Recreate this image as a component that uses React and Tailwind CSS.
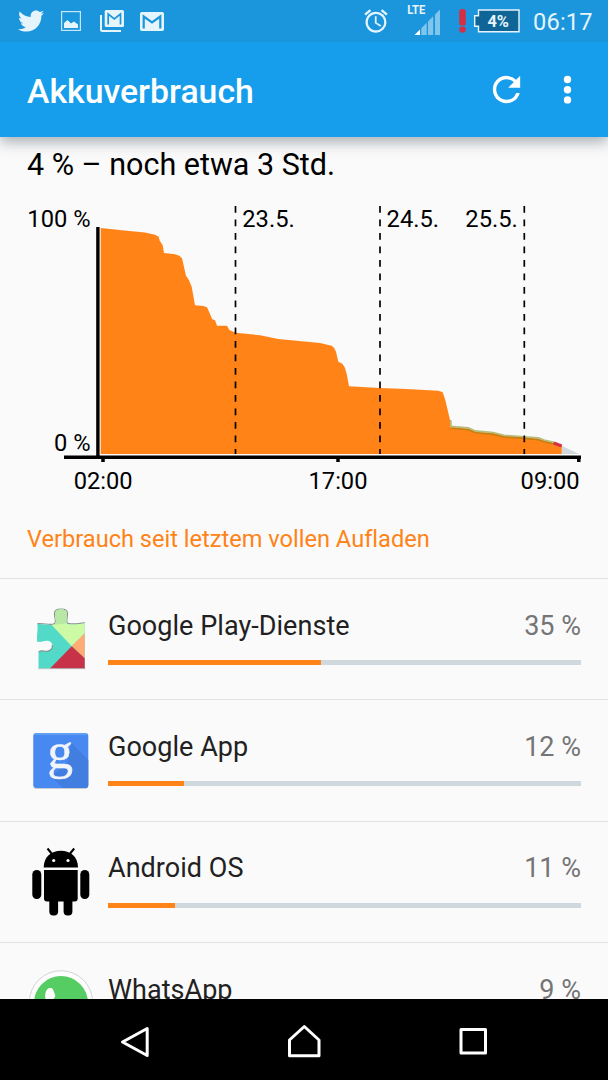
import { FaTwitter } from 'react-icons/fa';
import { MdAlarm, MdRefresh } from 'react-icons/md';

const apps = [
  { name: 'Google Play-Dienste', percent: 35, fill: 45, Icon: PlayServicesIcon },
  { name: 'Google App', percent: 12, fill: 16, Icon: GoogleIcon },
  { name: 'Android OS', percent: 11, fill: 14.2, Icon: AndroidIcon },
  { name: 'WhatsApp', percent: 9, fill: 11.6, Icon: WhatsAppIcon },
];

const dayLines = [235.5, 380, 524.3];

// battery level over time, in chart pixels
const levels =
  '100.7,228 126.7,230.7 145,232.5 155,234.8 158.7,236.7 159.7,240.7 162.7,245.3 164,253 175,254.3 179.3,255.7 182,258.3 184.3,268.3 186,275.7 189,280.3 191.7,286.7 195,305.3 203.3,306 207,307.3 209.7,313.3 212,319 215,320.3 217,325.7 227,325.7 229.3,330 235.7,332.7 260,335.3 278.3,339 320,343 331.7,345.7 334,347.7 336,351.7 338.3,361.7 342.3,363.7 344.7,367.3 346.7,374 349,386.3 380,388 406.7,389 438.3,390.7 442.7,392.3 445.3,400 450,420 450.7,427 468.3,428.7 475.3,431.7 493.3,433.3 504,436 524.3,437.3 538.3,438.7 544,440.7 553.7,442.7 561.7,445.7';

function PlayServicesIcon() {
  return (
    <svg width="68" height="80" viewBox="0 0 68 80">
      <defs>
        <clipPath id="puzzle">
          <path d="M10.500 25C16 24.500 21 26.500 26 25.800C31 25 28 19.500 28 15C28 12 30 10.500 34 10.500C38 10.500 40 12 40 15C40 19.500 37.500 25 42 25.200C47 26 52 25 57.700 24.200V69.500H11.500V52.700C13 50.500 17 52.500 20 52.300C27.500 51 27 42.500 20.500 41.800C17 41.500 13.500 44 10 42.500C9.500 37 11 31 10.500 25Z" />
        </clipPath>
      </defs>
      <path d="M10.500 24.700C16 24 21 26 26 25.300C30.500 24.500 27.500 19.500 27.500 14.500C27.500 11.500 30 10 34 10C38 10 40.500 11.500 40.500 14.500C40.500 19.500 38 24.500 42 24.700C47 25.500 52 24.500 57.700 23.700" fill="none" stroke="#8a918d" strokeWidth="1.2" />
      <g clipPath="url(#puzzle)">
        <rect width="68" height="80" fill="#52d9c8" />
        <path d="M23.700 25L28 5H45L58 20V34.300L44.700 47.200Z" fill="#cdfaa5" />
        <path d="M26 26L27 8H42V24Z" fill="#b9e7a4" />
        <path d="M58 34L44.700 47.200L58 60Z" fill="#ffab75" />
        <path d="M22.500 70L44.700 47.200L58 59.600V70Z" fill="#c73248" />
      </g>
      <path d="M11.700 53C13 50.500 17 52.500 20 52.300C24 52 26 49 25.200 46" fill="none" stroke="#7d9693" strokeWidth="1.2" />
      <path d="M11 69.700H58.500" stroke="#b5b5b5" strokeWidth=".7" />
    </svg>
  );
}

function GoogleIcon() {
  return (
    <svg width="68" height="80" viewBox="0 0 68 80">
      <rect x="6.500" y="14.300" width="54.500" height="54.800" rx="3" fill="#c9ccd0" />
      <rect x="6.300" y="13" width="55" height="55" rx="3" fill="#4889f1" />
      <path d="M44.500 23L61.300 40V65Q61.300 68 58 68H36L24 56L40 44Z" fill="#427de0" />
      <path d="M7.500 14H60" stroke="#79b3f7" strokeWidth="1" />
      <text x="20.600" y="47.800" fontSize="51" fill="#f1f4f8" stroke="#f1f4f8" strokeWidth=".5" className="font-['Liberation_Serif',serif]">g</text>
    </svg>
  );
}

function AndroidIcon() {
  return (
    <svg width="68" height="80" viewBox="0 0 68 80">
      <path d="M16.700 26.500C16.700 16 24 9.800 33.900 9.800S51 16 51 26.500Z" />
      <path d="M20.500 7.500L25 13M47.200 7.500L42.700 13" stroke="#000" strokeWidth="2" />
      <circle cx="26.700" cy="19.500" r="1.600" fill="#fff" />
      <circle cx="41" cy="19.500" r="1.600" fill="#fff" />
      <path d="M17 29H50.700V57.500Q50.700 60.500 47.700 60.500H20Q17 60.500 17 57.500Z" />
      <rect x="5.300" y="29" width="9" height="29" rx="4.400" />
      <rect x="53.300" y="29" width="9" height="29" rx="4.400" />
      <rect x="22.300" y="50" width="8.800" height="24.500" rx="4" />
      <rect x="36.600" y="50" width="8.800" height="24.500" rx="4" />
    </svg>
  );
}

function WhatsAppIcon() {
  return (
    <svg width="68" height="80" viewBox="0 0 68 80">
      <circle cx="34" cy="39.300" r="31.600" fill="#fdfdfd" stroke="#d4d4d4" strokeWidth="1" />
      <circle cx="34" cy="40" r="27" fill="#55cd62" />
      <path d="M18.500 36C17.500 31 19 26 22 25.200C24 24.500 25.500 25 26 26.500L28.200 32C28.400 34 27 35 26 36.500C30 43 34 46 40 48L32 54C25 50 20 43 18.500 36Z" fill="#fff" />
    </svg>
  );
}

function StatusBar() {
  return (
    <div className="z-20 flex h-[42px] shrink-0 items-center bg-[#1b96dc] text-[#e6f4fc]">
      <FaTwitter className="ml-[18px] size-[26px]" />
      <svg className="ml-[17px]" width="20" height="20" viewBox="0 0 20 20">
        <rect x=".6" y=".6" width="18.800" height="18.800" fill="none" stroke="currentColor" strokeWidth="1.2" opacity=".85" />
        <path d="M3 17V12L6.500 9L10 12.500L13 10.500L17 13.500V17Z" fill="currentColor" />
      </svg>
      <svg className="ml-[19px]" width="24" height="22" viewBox="0 0 24 22">
        <path d="M1 5V19.500Q1 21 2.500 21H21" fill="none" stroke="currentColor" strokeWidth="2" />
        <rect x="4.700" y="0" width="19.300" height="17" rx="1.500" fill="currentColor" />
        <path d="M8.200 14.500V4L14.300 9L20.500 4V14.500" fill="none" stroke="#1b96dc" strokeWidth="1.700" />
      </svg>
      <svg className="ml-4" width="24" height="19" viewBox="0 0 24 19">
        <rect width="24" height="19" rx="1.800" fill="currentColor" />
        <path d="M3.700 16.500V4.500L12 10.500L20.300 4.500V16.500" fill="none" stroke="#1b96dc" strokeWidth="2.200" />
      </svg>
      <MdAlarm className="ml-auto size-[28px]" />
      <svg className="ml-[15px]" width="38" height="42" viewBox="0 0 38 42">
        <text x="2.300" y="14.400" fontSize="12" fontWeight="700" fill="currentColor" textLength="18" lengthAdjust="spacingAndGlyphs">LTE</text>
        <path d="M9.500 35L15 29.500V35Z" fill="#fff" />
        <path d="M16.300 28.300L21.700 22.800V35H16.300ZM23 21.500L28.200 16.300V35H23ZM30 14.500L35 9.500V35H30Z" fill="currentColor" opacity=".5" />
      </svg>
      <svg className="ml-4" width="7" height="24" viewBox="0 0 7 24">
        <rect width="6.600" height="16.500" x=".2" rx="2.600" fill="#d52f45" />
        <ellipse cx="3.500" cy="20.600" rx="3.300" ry="3.100" fill="#d52f45" />
      </svg>
      <svg className="ml-[7px]" width="48" height="24" viewBox="0 0 48 24">
        <path d="M5.500 1H46V22.800H5.500V17.300H1.700V6.800H5.500Z" fill="#0f6596" stroke="#e6f4fc" strokeWidth="1.400" />
        <text x="25.200" y="18" fontSize="17" fontWeight="700" textAnchor="middle" fill="currentColor" textLength="21.500" lengthAdjust="spacingAndGlyphs">4%</text>
      </svg>
      <span className="mt-[2px] mr-[15px] ml-[12px] w-[60px] text-[23.600px] leading-[42px] tracking-[.2px] whitespace-nowrap">06:17</span>
    </div>
  );
}

function BatteryChart() {
  return (
    <svg className="block" width="608" height="310" viewBox="0 190 608 310" fontSize="23.700">
      <polygon points="561.7,445.7 579,454 561.7,454" fill="#d0d8db" />
      <polygon points={`${levels} 561.7,454 100.7,454`} fill="#ff8316" />
      <polyline points="450.700,420 451,426.500 468.300,428 475.300,431 493.300,432.700 504,435.300 524.300,436.800 538.300,438 544,440.200 554,442.300" fill="none" stroke="#b9bd7c" strokeWidth="1.8" />
      <polyline points="451.500,428.200 468.300,429.800 475.300,432.700 493.300,434.400 504,437 524.300,438.400 538.300,439.700 544,441.800 554,444" fill="none" stroke="#c87f12" strokeWidth="1.6" />
      <path d="M553.700 443L561.700 446" stroke="#d23246" strokeWidth="3.200" />
      {dayLines.map((x) => (
        <path key={x} d={`M${x} 206V454`} stroke="#000" strokeWidth="1.700" strokeDasharray="6.750 6.750" />
      ))}
      <path d="M97.900 227V457M64 457.300H581" stroke="#000" strokeWidth="3.400" />
      <path d="M103 458V462M338 458V462M578.800 458V462" stroke="#000" strokeWidth="3.500" />
      <text x="90.500" y="227" textAnchor="end">100 %</text>
      <text x="90.500" y="450.500" textAnchor="end">0 %</text>
      <text x="242.300" y="227">23.5.</text>
      <text x="386.600" y="227">24.5.</text>
      <text x="517.800" y="227" textAnchor="end">25.5.</text>
      <text x="103.200" y="488.500" textAnchor="middle">02:00</text>
      <text x="338" y="488.500" textAnchor="middle">17:00</text>
      <text x="579.600" y="488.500" textAnchor="end">09:00</text>
    </svg>
  );
}

function AppRow({ app }) {
  const { name, percent, fill, Icon } = app;
  return (
    <li className="flex h-[121.400px] shrink-0 border-t border-[#e2e2e2] pr-[27px] pl-[27px]">
      <div className="mt-[19.500px] w-[68px] shrink-0">
        <Icon />
      </div>
      <div className="ml-[13px] grow pt-[30.600px]">
        <div className="flex justify-between text-[27px] leading-8">
          <span className="tracking-[.04px] text-[#212121]">{name}</span>
          <span className="text-[#757575]">{percent} %</span>
        </div>
        <div className="mt-[18.400px] h-[5px] bg-[#cfd8dc]">
          <div className="h-full bg-[#ff8316]" style={{ width: `${fill}%` }} />
        </div>
      </div>
    </li>
  );
}

function NavBar() {
  return (
    <nav className="flex h-[81px] shrink-0 items-center bg-black">
      <svg className="ml-[119px]" width="32" height="36" viewBox="0 0 32 36" fill="none" stroke="#fff" strokeWidth="3" strokeLinejoin="round">
        <path d="M28.200 6.500V33.500L3.500 20Z" />
      </svg>
      <svg className="ml-[135px]" width="36" height="36" viewBox="0 0 36 36" fill="none" stroke="#fff" strokeWidth="3" strokeLinejoin="round">
        <path d="M3.500 18L18.300 4.500L33 18V33.800H3.500Z" />
      </svg>
      <svg className="ml-[135px]" width="32" height="36" viewBox="0 0 32 36" fill="none" stroke="#fff" strokeWidth="3" strokeLinejoin="round">
        <rect x="4" y="7.500" width="24.500" height="23.500" />
      </svg>
    </nav>
  );
}

export default function App() {
  return (
    <div className="flex h-[1080px] w-[608px] flex-col overflow-hidden bg-[#fafafa] font-[Roboto,sans-serif] text-black [font-variant-ligatures:none]">
      <StatusBar />
      <header className="z-10 flex h-[95px] shrink-0 items-center bg-[#169deb] text-white shadow-[0_5px_13px_rgba(40,60,70,0.4)]">
        <h1 className="mt-1 ml-[27px] text-[33.800px] leading-10 font-medium">Akkuverbrauch</h1>
        <MdRefresh className="ml-auto size-[41px]" />
        <svg className="mr-[36px] ml-[36px]" width="9" height="30" viewBox="0 0 9 30" fill="currentColor">
          <circle cx="4.500" cy="4.500" r="3.700" />
          <circle cx="4.500" cy="14.700" r="3.700" />
          <circle cx="4.500" cy="24.900" r="3.700" />
        </svg>
      </header>
      <main className="flex min-h-0 grow flex-col overflow-hidden">
        <p className="mt-[10px] h-[43px] shrink-0 pl-[27px] text-[30.500px] leading-9">4 % – noch etwa 3 Std.</p>
        <div className="h-[310px] shrink-0">
          <BatteryChart />
        </div>
        <h2 className="h-[78px] shrink-0 pt-[23px] pl-[27px] text-[23.600px] leading-8 text-[#ff8316]">Verbrauch seit letztem vollen Aufladen</h2>
        <ul>
          {apps.map((app) => (
            <AppRow key={app.name} app={app} />
          ))}
        </ul>
      </main>
      <NavBar />
    </div>
  );
}
